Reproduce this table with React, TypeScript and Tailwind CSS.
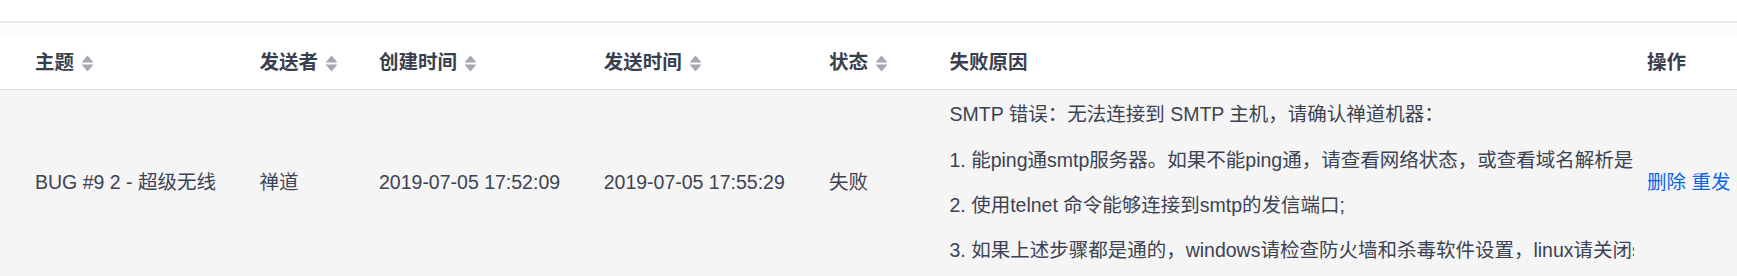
import React from "react";

function SortIcon() {
  return (
    <svg width="13" height="17" viewBox="0 0 13 17" className="ml-[7px] shrink-0">
      <polygon points="0.5,7.5 6.5,0.5 12.5,7.5" fill="#a5a8b2" />
      <polygon points="0.5,9.5 12.5,9.5 6.5,16.5" fill="#a5a8b2" />
    </svg>
  );
}

function Th({ label, sort = true }: { label: string; sort?: boolean }) {
  return (
    <div className="flex items-center font-bold text-[#393f4f]">
      <span>{label}</span>
      {sort && <SortIcon />}
    </div>
  );
}

const cols =
  "grid grid-cols-[224.5px_119.5px_224.7px_225.3px_120.5px_697.5px_1fr] pl-[35px]";

export default function App() {
  const reasons = [
    "SMTP 错误：无法连接到 SMTP 主机，请确认禅道机器：",
    "1. 能ping通smtp服务器。如果不能ping通，请查看网络状态，或查看域名解析是否正确。",
    "2. 使用telnet 命令能够连接到smtp的发信端口;",
    "3. 如果上述步骤都是通的，windows请检查防火墙和杀毒软件设置，linux请关闭selinux。",
  ];
  return (
    <div className="w-[1737px] h-[276px] overflow-hidden bg-white text-[19.5px] font-['Liberation_Sans','Noto_Sans_CJK_SC',sans-serif]">
      <div className="h-[21px] bg-white" />
      <div className="h-[2px] bg-[#ebebeb]" />
      <div className="h-[14px] bg-[#fbfbfb]" />
      <div className={`${cols} h-[53px] items-center border-b border-[#dcdcdc] bg-white`}>
        <Th label="主题" />
        <Th label="发送者" />
        <Th label="创建时间" />
        <Th label="发送时间" />
        <Th label="状态" />
        <Th label="失败原因" sort={false} />
        <Th label="操作" sort={false} />
      </div>
      <div className={`${cols} h-[186px] items-center bg-[#f5f5f5] text-[#3c4353]`}>
        <div className="whitespace-nowrap">BUG #9 2 - 超级无线</div>
        <div className="whitespace-nowrap">禅道</div>
        <div className="whitespace-nowrap">2019-07-05 17:52:09</div>
        <div className="whitespace-nowrap">2019-07-05 17:55:29</div>
        <div className="whitespace-nowrap">失败</div>
        <div className="pr-[13px] py-[2px]">
          <div className="overflow-hidden whitespace-nowrap">
            {reasons.map((r) => (
              <div key={r} className="leading-[45.33px]">
                {r}
              </div>
            ))}
          </div>
        </div>
        <div className="whitespace-nowrap text-[#0c64eb]">
          <a href="#">删除</a> <a href="#">重发</a>
        </div>
      </div>
    </div>
  );
}
